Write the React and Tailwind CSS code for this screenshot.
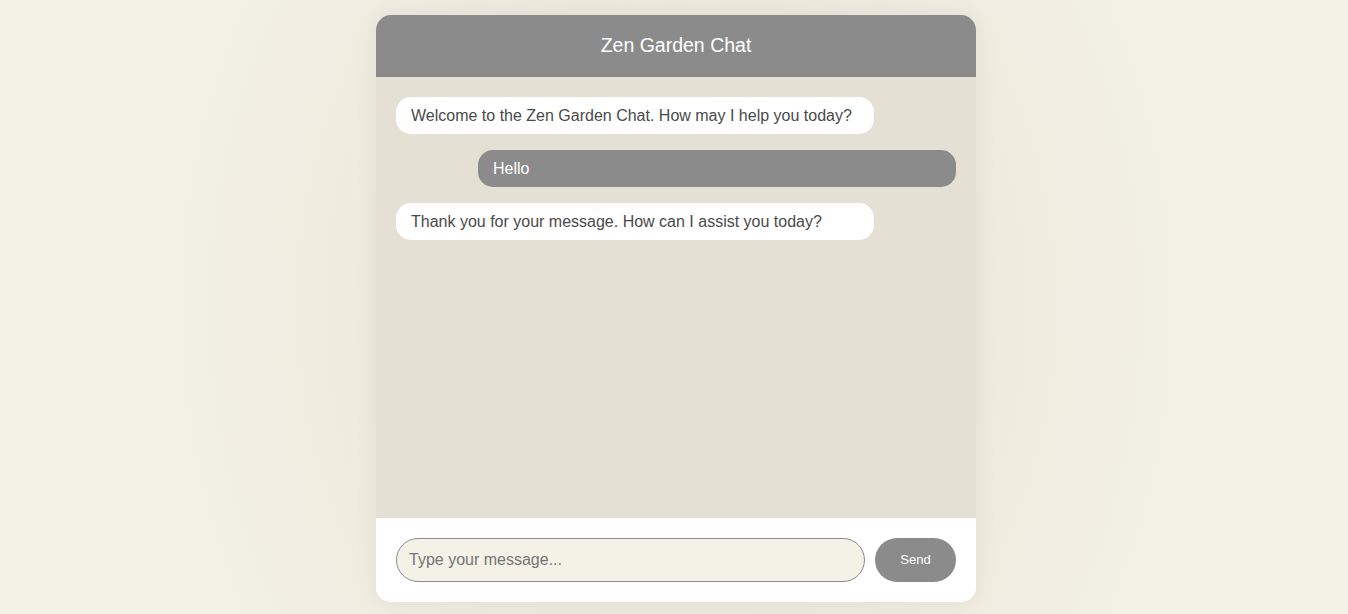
import { useState } from 'react'

const initialMessages = [
  { id: 1, from: 'bot', text: 'Welcome to the Zen Garden Chat. How may I help you today?' },
  { id: 2, from: 'user', text: 'Hello' },
  { id: 3, from: 'bot', text: 'Thank you for your message. How can I assist you today?' },
]

export default function App() {
  const [messages] = useState(initialMessages)
  const [draft, setDraft] = useState('')

  return (
    <div
      className="min-h-screen w-full bg-[#f4f1e6] bg-[radial-gradient(ellipse_560px_700px_at_676px_50%,#e6e2d5_0%,#ede9dd_45%,#f4f1e6_100%)] flex justify-center pt-[15px] pl-1"
      style={{ fontFamily: '"Liberation Sans", Arial, sans-serif' }}
    >
      <div className="w-[600px] h-[587px] flex flex-col rounded-[15px] overflow-hidden bg-white shadow-[0_0_24px_rgba(0,0,0,0.06)]">
        {/* Header */}
        <div className="h-[62px] shrink-0 bg-[#8b8b8b] flex items-center justify-center">
          <h1 className="text-[19.5px] text-white font-normal">Zen Garden Chat</h1>
        </div>

        {/* Messages */}
        <div className="flex-1 bg-[#e4e1d4] p-5 flex flex-col gap-4 overflow-y-auto">
          {messages.map(m => (
            <div
              key={m.id}
              className={
                m.from === 'user'
                  ? 'self-end w-[478px] rounded-[15px] bg-[#8b8b8b] text-white px-[15px] py-[9px] text-base leading-[19px]'
                  : 'self-start w-[478px] rounded-[15px] bg-white text-[#4a4a4a] px-[15px] py-[9px] text-base leading-[19px]'
              }
            >
              {m.text}
            </div>
          ))}
        </div>

        {/* Input */}
        <div className="h-[84px] shrink-0 bg-white px-5 flex items-center gap-[10px]">
          <input
            type="text"
            value={draft}
            onChange={e => setDraft(e.target.value)}
            placeholder="Type your message..."
            className="flex-1 h-[44px] rounded-full border border-[#8b8b8b] bg-[#f4f1e6] px-3 text-base text-[#444444] placeholder:text-[#757575] outline-none"
          />
          <button className="w-[81px] h-[44px] rounded-full bg-[#8b8b8b] text-white text-[13px]">
            Send
          </button>
        </div>
      </div>
    </div>
  )
}
